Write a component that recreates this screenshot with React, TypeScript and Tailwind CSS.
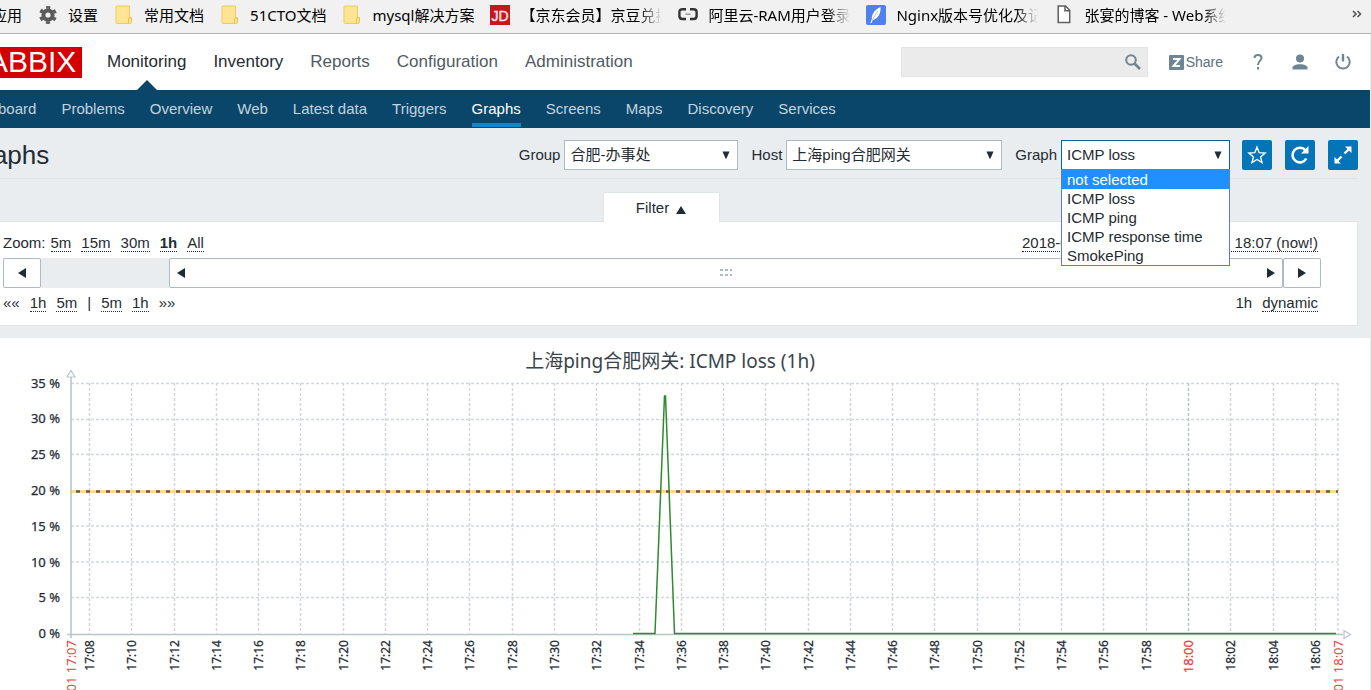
import { type ReactNode } from "react";
import clsx from "clsx";

const topMenu = ["Monitoring", "Inventory", "Reports", "Configuration", "Administration"];
const subMenu = ["Dashboard", "Problems", "Overview", "Web", "Latest data", "Triggers", "Graphs", "Screens", "Maps", "Discovery", "Services"];
const graphOptions = ["not selected", "ICMP loss", "ICMP ping", "ICMP response time", "SmokePing"];

function GearIcon() {
  return (
    <svg width="20" height="20" viewBox="0 0 20 20" fill="none" stroke="#5a5a5a">
      <circle cx="10" cy="10" r="4.6" strokeWidth="4" />
      <circle cx="10" cy="10" r="7.6" strokeWidth="2.6" strokeDasharray="3.98 3.98" strokeDashoffset="2" transform="rotate(30 10 10)" />
    </svg>
  );
}

function FolderIcon() {
  return (
    <svg width="20" height="20" viewBox="0 0 20 20">
      <path d="M3 1h12.500v11.500h2V17a1.500 1.500 0 0 1-1.500 1.500H3A1 1 0 0 1 2 17.500V2a1 1 0 0 1 1-1z" fill="#ffe493" stroke="#f0cb5c" />
      <path d="M14.500 18v-4a1.500 1.500 0 0 1 3 0v3" fill="#ffe493" stroke="#eec14a" />
    </svg>
  );
}

function JdIcon() {
  return (
    <svg width="20" height="20" viewBox="0 0 20 20">
      <rect width="20" height="20" fill="#c9151e" />
      <text x="10" y="15.500" textAnchor="middle" fontSize="14" fontFamily="Liberation Sans, sans-serif" fill="#fbe3e3" stroke="#fbe3e3" strokeWidth=".4">JD</text>
    </svg>
  );
}

function CloudIcon() {
  return (
    <svg width="20" height="20" viewBox="0 0 20 20" fill="none" stroke="#333" strokeWidth="2.400">
      <path d="M8 4.200H4.500Q1.400 4.200 1.400 7v4q0 3 3.100 3H8M12 4.200h3.500q3.100 0 3.100 2.800v4q0 3-3.100 3H12" />
      <path d="M7.500 9.200h5" stroke="#999" strokeWidth="1.500" />
    </svg>
  );
}

function FeatherIcon() {
  return (
    <svg width="20" height="20" viewBox="0 0 20 20">
      <rect width="20" height="20" rx="2" fill="#4f80ee" />
      <path d="M14.500 2C9 4.500 5.500 9 5.800 14.300L4.300 18h1.200l1.300-2.900C12.500 13.500 15 8 14.500 2z" fill="#fff" />
      <path d="M12 6C9.500 9 8 11.500 6.500 15" stroke="#9db9f6" strokeWidth=".8" fill="none" />
    </svg>
  );
}

function PageIcon() {
  return (
    <svg width="20" height="20" viewBox="0 0 20 20" fill="#fff" stroke="#5f5f5f" strokeWidth="1.500">
      <path d="M4.200 1h7.300l4.200 4.200v12.200H4.200z" />
      <path d="M11 1v4.700h4.700" fill="none" />
    </svg>
  );
}

const bookmarks: { label: string; icon?: ReactNode; cut?: boolean }[] = [
  { label: "应用" },
  { label: "设置", icon: <GearIcon /> },
  { label: "常用文档", icon: <FolderIcon /> },
  { label: "51CTO文档", icon: <FolderIcon /> },
  { label: "mysql解决方案", icon: <FolderIcon /> },
  { label: "【京东会员】京豆兑换", icon: <JdIcon />, cut: true },
  { label: "阿里云-RAM用户登录", icon: <CloudIcon />, cut: true },
  { label: "Nginx版本号优化及记录", icon: <FeatherIcon />, cut: true },
  { label: "张宴的博客 - Web系统", icon: <PageIcon />, cut: true },
];

function BookmarksBar() {
  return (
    <div className="flex h-[34px] shrink-0 items-center border-b border-[#b3b0b3] bg-[#f1f1f1] pb-1 pr-2 font-['Noto_Sans','Noto_Sans_CJK_SC',sans-serif] text-[15px] text-black">
      <div className="-ml-2 flex min-w-0 flex-1 items-center gap-4 overflow-hidden">
        {bookmarks.map((b) => (
          <a key={b.label} href="#" className="flex shrink-0 items-center gap-[10px] whitespace-nowrap">
            {b.icon}
            <span className={clsx("leading-8", b.cut && "w-[142px] overflow-hidden [mask-image:linear-gradient(to_right,black_84%,transparent)]")}>{b.label}</span>
          </a>
        ))}
      </div>
      <button aria-label="More bookmarks" className="text-[#555]">
        <svg width="12" height="10" viewBox="0 0 12 10" fill="none" stroke="currentColor" strokeWidth="1.600"><path d="M2 1l3 3-3 3M6.500 1l3 3-3 3" /></svg>
      </button>
    </div>
  );
}

function TopBar() {
  return (
    <header className="flex h-14 items-center bg-white pl-3 pr-[18px]">
      <a href="#" className="flex h-[31px] w-[118px] items-center justify-center bg-[#d40000] text-[30px] leading-none text-white">ZABBIX</a>
      <nav className="ml-[25px] flex h-full gap-[27px] text-[17px]">
        {topMenu.map((m, i) => (
          <a key={m} href="#" className={clsx("relative flex items-center", i < 2 ? "text-[#1f2c33]" : "text-[#4f5b63]")}>
            {m}
            {i === 0 && <span className="absolute bottom-0 left-1/2 -translate-x-1/2 border-x-[10px] border-b-[10px] border-x-transparent border-b-[#0a466a]" />}
          </a>
        ))}
      </nav>
      <div className="ml-auto flex items-center text-[#6f8593]">
        <form className="flex h-[30px] w-[247px] items-center border border-[#e3e3e3] bg-[#ebebeb] pr-[5px]">
          <input aria-label="Search" className="h-full min-w-0 flex-1 bg-transparent px-2 text-[15px] outline-none" />
          <button type="button" aria-label="Search button">
            <svg width="18" height="18" viewBox="0 0 18 18" fill="none" stroke="currentColor"><circle cx="7" cy="7" r="4.800" strokeWidth="2" /><path d="M10.500 10.500l5.500 5.500" strokeWidth="2.600" /></svg>
          </button>
        </form>
        <a href="#" className="ml-[21px] flex items-center gap-[2px] text-[14px] text-[#5c6f7b]">
          <svg width="15" height="15" viewBox="0 0 15 15"><rect width="15" height="15" rx="1" fill="#6f8593" /><path d="M4 4h6.500L4.500 11H11" fill="none" stroke="#fff" strokeWidth="2" /></svg>
          Share
        </a>
        <a href="#" aria-label="Help" className="ml-[29px]">
          <svg width="12" height="18" viewBox="0 0 12 18" fill="none" stroke="currentColor" strokeWidth="2"><path d="M2.500 5C2.500 1 9.500 1 9.500 5c0 2.500-3.500 3-3.500 7" /><path d="M6 14v2.500" /></svg>
        </a>
        <a href="#" aria-label="User profile" className="ml-7">
          <svg width="16" height="16" viewBox="0 0 16 16" fill="currentColor"><circle cx="8" cy="4.500" r="4" /><path d="M.5 15.500v-2c0-2 3.500-3.300 7.500-3.300s7.500 1.300 7.500 3.300v2z" /></svg>
        </a>
        <a href="#" aria-label="Sign out" className="ml-[26px]">
          <svg width="18" height="18" viewBox="0 0 18 18" fill="none" stroke="currentColor" strokeWidth="2"><path d="M5 3.500a6.700 6.700 0 1 0 8 0" /><path d="M9 1v7.500" strokeWidth="2.400" /></svg>
        </a>
      </div>
    </header>
  );
}

function SubNav() {
  return (
    <nav className="flex h-[38px] gap-[25px] bg-[#0a466a] px-[11px] text-[15px]">
      {subMenu.map((m) => (
        <a key={m} href="#" className={clsx("mb-px flex items-center whitespace-nowrap border-b-4 border-t-[6px] border-t-transparent", m === "Graphs" ? "border-b-[#1284ca] text-white" : "border-b-transparent text-[#c3d3de]")}>{m}</a>
      ))}
    </nav>
  );
}

function Picker({ id, label, value, className, options, open }: { id: string; label: string; value: string; className: string; options: string[]; open?: boolean }) {
  return (
    <div className="flex items-center gap-1">
      <label htmlFor={id}>{label}</label>
      <div className={clsx("relative", className)}>
        <select id={id} defaultValue={value} className={clsx("h-[30px] w-full appearance-none border bg-white pl-[5px] pr-6 outline-none", open ? "border-[#00689c]" : "border-[#acbbc2]")}>
          {options.map((o) => <option key={o}>{o}</option>)}
        </select>
        <svg className="pointer-events-none absolute right-2 top-[11px]" width="8" height="8" viewBox="0 0 8 8" fill="#1f2c33"><path d="M.5 .5h7L4.500 7.500h-1z" /></svg>
        {open && (
          <ul role="listbox" aria-label={label} className="absolute inset-x-0 top-[29px] z-20 border border-[#5a80bb] bg-white">
            {options.map((o, i) => (
              <li key={o} role="option" aria-selected={i === 0} className={clsx("px-[5px] leading-[19px]", i === 0 && "bg-[#1e90ff] text-white")}>{o}</li>
            ))}
          </ul>
        )}
      </div>
    </div>
  );
}

function ActionButton({ label, children }: { label: string; children: ReactNode }) {
  return (
    <button aria-label={label} className="flex size-[30px] items-center justify-center rounded-[2px] bg-[#0275b8] text-white">
      <svg width="22" height="22" viewBox="0 0 22 22" fill="none" stroke="currentColor">{children}</svg>
    </button>
  );
}

function PageHeader() {
  return (
    <div className="mx-3 flex h-[51px] items-center border-b border-[#dfe4e7] pt-1">
      <h1 className="text-[26px] leading-8">Graphs</h1>
      <div className="ml-auto mr-3 flex gap-[13px]">
        <Picker id="group" label="Group" value="合肥-办事处" className="w-[174px]" options={["合肥-办事处"]} />
        <Picker id="host" label="Host" value="上海ping合肥网关" className="w-[216px]" options={["上海ping合肥网关"]} />
        <Picker id="graph" label="Graph" value="ICMP loss" className="w-[169px]" options={graphOptions} open />
      </div>
      <div className="flex gap-[13px]">
        <ActionButton label="Add to favourites">
          <path d="M11 3.200l2.200 5.500 5.900.4-4.500 3.800 1.400 5.700-5-3.100-5 3.100 1.400-5.700L2.900 9.100l5.900-.4z" strokeWidth="1.400" />
        </ActionButton>
        <ActionButton label="Refresh">
          <path d="M17.300 14.500A7.300 7.300 0 1 1 16.500 6.500" strokeWidth="2.600" />
          <path d="M19.500 2v7.500H12z" fill="currentColor" stroke="none" />
        </ActionButton>
        <ActionButton label="Fullscreen">
          <path d="M12.500 9.500l4-4M9.500 12.500l-4 4" strokeWidth="2.400" />
          <path d="M13 2.500h6.500V9zM2.500 13v6.500H9z" fill="currentColor" stroke="none" />
        </ActionButton>
      </div>
    </div>
  );
}

function PeriodLink({ children, active }: { children: ReactNode; active?: boolean }) {
  return <a href="#" className={clsx("border-b border-dotted border-[#1f2c33]", active && "font-bold")}>{children}</a>;
}

function Triangle({ dir }: { dir: "left" | "right" }) {
  return <svg width="8" height="10" viewBox="0 0 8 10" fill="#1f2c33"><path d={dir === "left" ? "M8 0v10L0 5z" : "M0 0v10l8-5z"} /></svg>;
}

function TimeFilter() {
  return (
    <section className="mx-3 pt-[13px]">
      <div className="flex justify-center">
        <button className="relative z-10 -mb-px flex h-[30px] w-[117px] items-center justify-center gap-[7px] rounded-t-[2px] border border-b-0 border-[#dfe4e7] bg-white pt-px">
          Filter
          <svg className="mt-1" width="10" height="8" viewBox="0 0 10 8" fill="#1f2c33"><path d="M5 0l5 8H0z" /></svg>
        </button>
      </div>
      <div className="border border-[#dfe4e7] bg-white pb-[13px] pl-[38px] pr-9 pt-3 leading-[17px]">
        <div className="flex justify-between pr-[3px]">
          <div className="flex gap-[10px]">
            <span className="-mr-[5px]">Zoom:</span>
            <PeriodLink>5m</PeriodLink>
            <PeriodLink>15m</PeriodLink>
            <PeriodLink>30m</PeriodLink>
            <PeriodLink active>1h</PeriodLink>
            <PeriodLink>All</PeriodLink>
          </div>
          <PeriodLink>2018-08-01 17:07 - 2018-08-01 18:07 (now!)</PeriodLink>
        </div>
        <div className="my-[6px] flex h-[30px] bg-[#e9edf0]">
          <button aria-label="Earlier" className="flex w-[38px] items-center justify-center rounded-[2px] border border-[#acbbc2] bg-white"><Triangle dir="left" /></button>
          <div className="ml-32 flex flex-1 items-center justify-between rounded-[2px] border border-[#acbbc2] bg-white px-[7px]">
            <Triangle dir="left" />
            <svg width="12" height="8" viewBox="0 0 12 8" fill="#acbbc2"><path d="M0 0h3v2H0zM5 0h3v2H5zM10 0h2v2h-2zM0 5h3v2H0zM5 5h3v2H5zM10 5h2v2h-2z" /></svg>
            <Triangle dir="right" />
          </div>
          <button aria-label="Later" className="flex w-[38px] items-center justify-center rounded-[2px] border border-[#acbbc2] bg-white"><Triangle dir="right" /></button>
        </div>
        <div className="flex justify-between pr-[3px]">
          <div className="flex gap-[10px]">
            <span>««</span>
            <PeriodLink>1h</PeriodLink>
            <PeriodLink>5m</PeriodLink>
            <span>|</span>
            <PeriodLink>5m</PeriodLink>
            <PeriodLink>1h</PeriodLink>
            <span>»»</span>
          </div>
          <div className="flex gap-[10px]">
            <span>1h</span>
            <PeriodLink>dynamic</PeriodLink>
          </div>
        </div>
      </div>
    </section>
  );
}

// 17:08 to 18:06, one tick every two minutes
const ticks = Array.from({ length: 30 }, (_, i) => {
  const m = 8 + i * 2;
  const hour = m < 60 ? 17 : 18;
  return { x: Math.round(89 + i * 42.27) + 0.5, label: `${hour}:${String(m % 60).padStart(2, "0")}`, hot: m === 60 };
});

const levels = [
  { label: "35 %", y: 45.5 },
  { label: "30 %", y: 81.5 },
  { label: "25 %", y: 116.5 },
  { label: "20 %", y: 153.5 },
  { label: "15 %", y: 188 },
  { label: "10 %", y: 224 },
  { label: "5 %", y: 259.5 },
  { label: "0 %", y: 296.5 },
];

function Graph() {
  return (
    <svg viewBox="-48 0 1418 400" className="w-full font-['Noto_Sans','Noto_Sans_CJK_SC',sans-serif]" fill="#1f2c33">
      <text x="670" y="30" textAnchor="middle" className="text-[19px]" fill="#38454c">上海ping合肥网关: ICMP loss (1h)</text>
      <g stroke="#d0d8dc" strokeWidth="1.500" strokeDasharray="3 2">
        {levels.slice(0, 7).map((l) => <path key={l.label} d={`M71 ${l.y}H1338`} />)}
        {ticks.map((t) => <path key={t.label} d={`M${t.x} 45V296`} stroke={t.hot ? "#b9c5cc" : undefined} />)}
        <path d="M1338 45V296" />
      </g>
      <path d="M71 153.500H1338" stroke="#ffd98c" strokeWidth="3" />
      <path d="M76 153.500H1338" stroke="#5c5c5c" strokeWidth="2.400" strokeDasharray="4 6" />
      <g stroke="#b9c5cb" fill="#fff">
        <path d="M71 39V300M67 296.500H1343" strokeWidth="1.600" />
        <path d="M71 32.500l4 6.500h-8zM1350.500 296.500l-6.500 4v-8z" strokeWidth="1.200" />
      </g>
      <path d="M633 295.500H655L664.500 58H665.500L674.500 295.500H1336" fill="none" stroke="#2f8a2f" strokeWidth="1.500" />
      <g className="text-[13px]" textAnchor="end" stroke="#1f2c33" strokeWidth=".25">
        {levels.map((l, i) => <text key={l.label} x="60" y={Math.round(49.5 + i * 35.8)}>{l.label}</text>)}
      </g>
      <g textAnchor="end">
        {ticks.map((t) => (
          <text key={t.label} transform={`translate(${t.x + 4.5} 302) rotate(-90)`} className={t.hot ? "text-[13px]" : "text-[12px]"} fill={t.hot ? "#f03c3c" : undefined} stroke={t.hot ? "#f03c3c" : "#1f2c33"} strokeWidth=".25">{t.label}</text>
        ))}
        <text transform="translate(75.500 302) rotate(-90)" className="text-[13px]" fill="#f03c3c">08-01 17:07</text>
        <text transform="translate(1342.500 302) rotate(-90)" className="text-[13px]" fill="#f03c3c">08-01 18:07</text>
      </g>
    </svg>
  );
}

export default function App() {
  return (
    <div className="flex h-screen flex-col overflow-hidden font-['Liberation_Sans','Noto_Sans_CJK_SC',sans-serif] text-[15px] text-[#1f2c33]">
      <BookmarksBar />
      <div className="min-h-0 flex-1 overflow-hidden border-r border-[#ececec] bg-[#e9edf0]">
        {/* wide page, scrolled a little to the right */}
        <div className="-ml-12">
          <TopBar />
          <SubNav />
          <PageHeader />
          <TimeFilter />
          <main className="mt-3 bg-white">
            <Graph />
          </main>
        </div>
      </div>
    </div>
  );
}
